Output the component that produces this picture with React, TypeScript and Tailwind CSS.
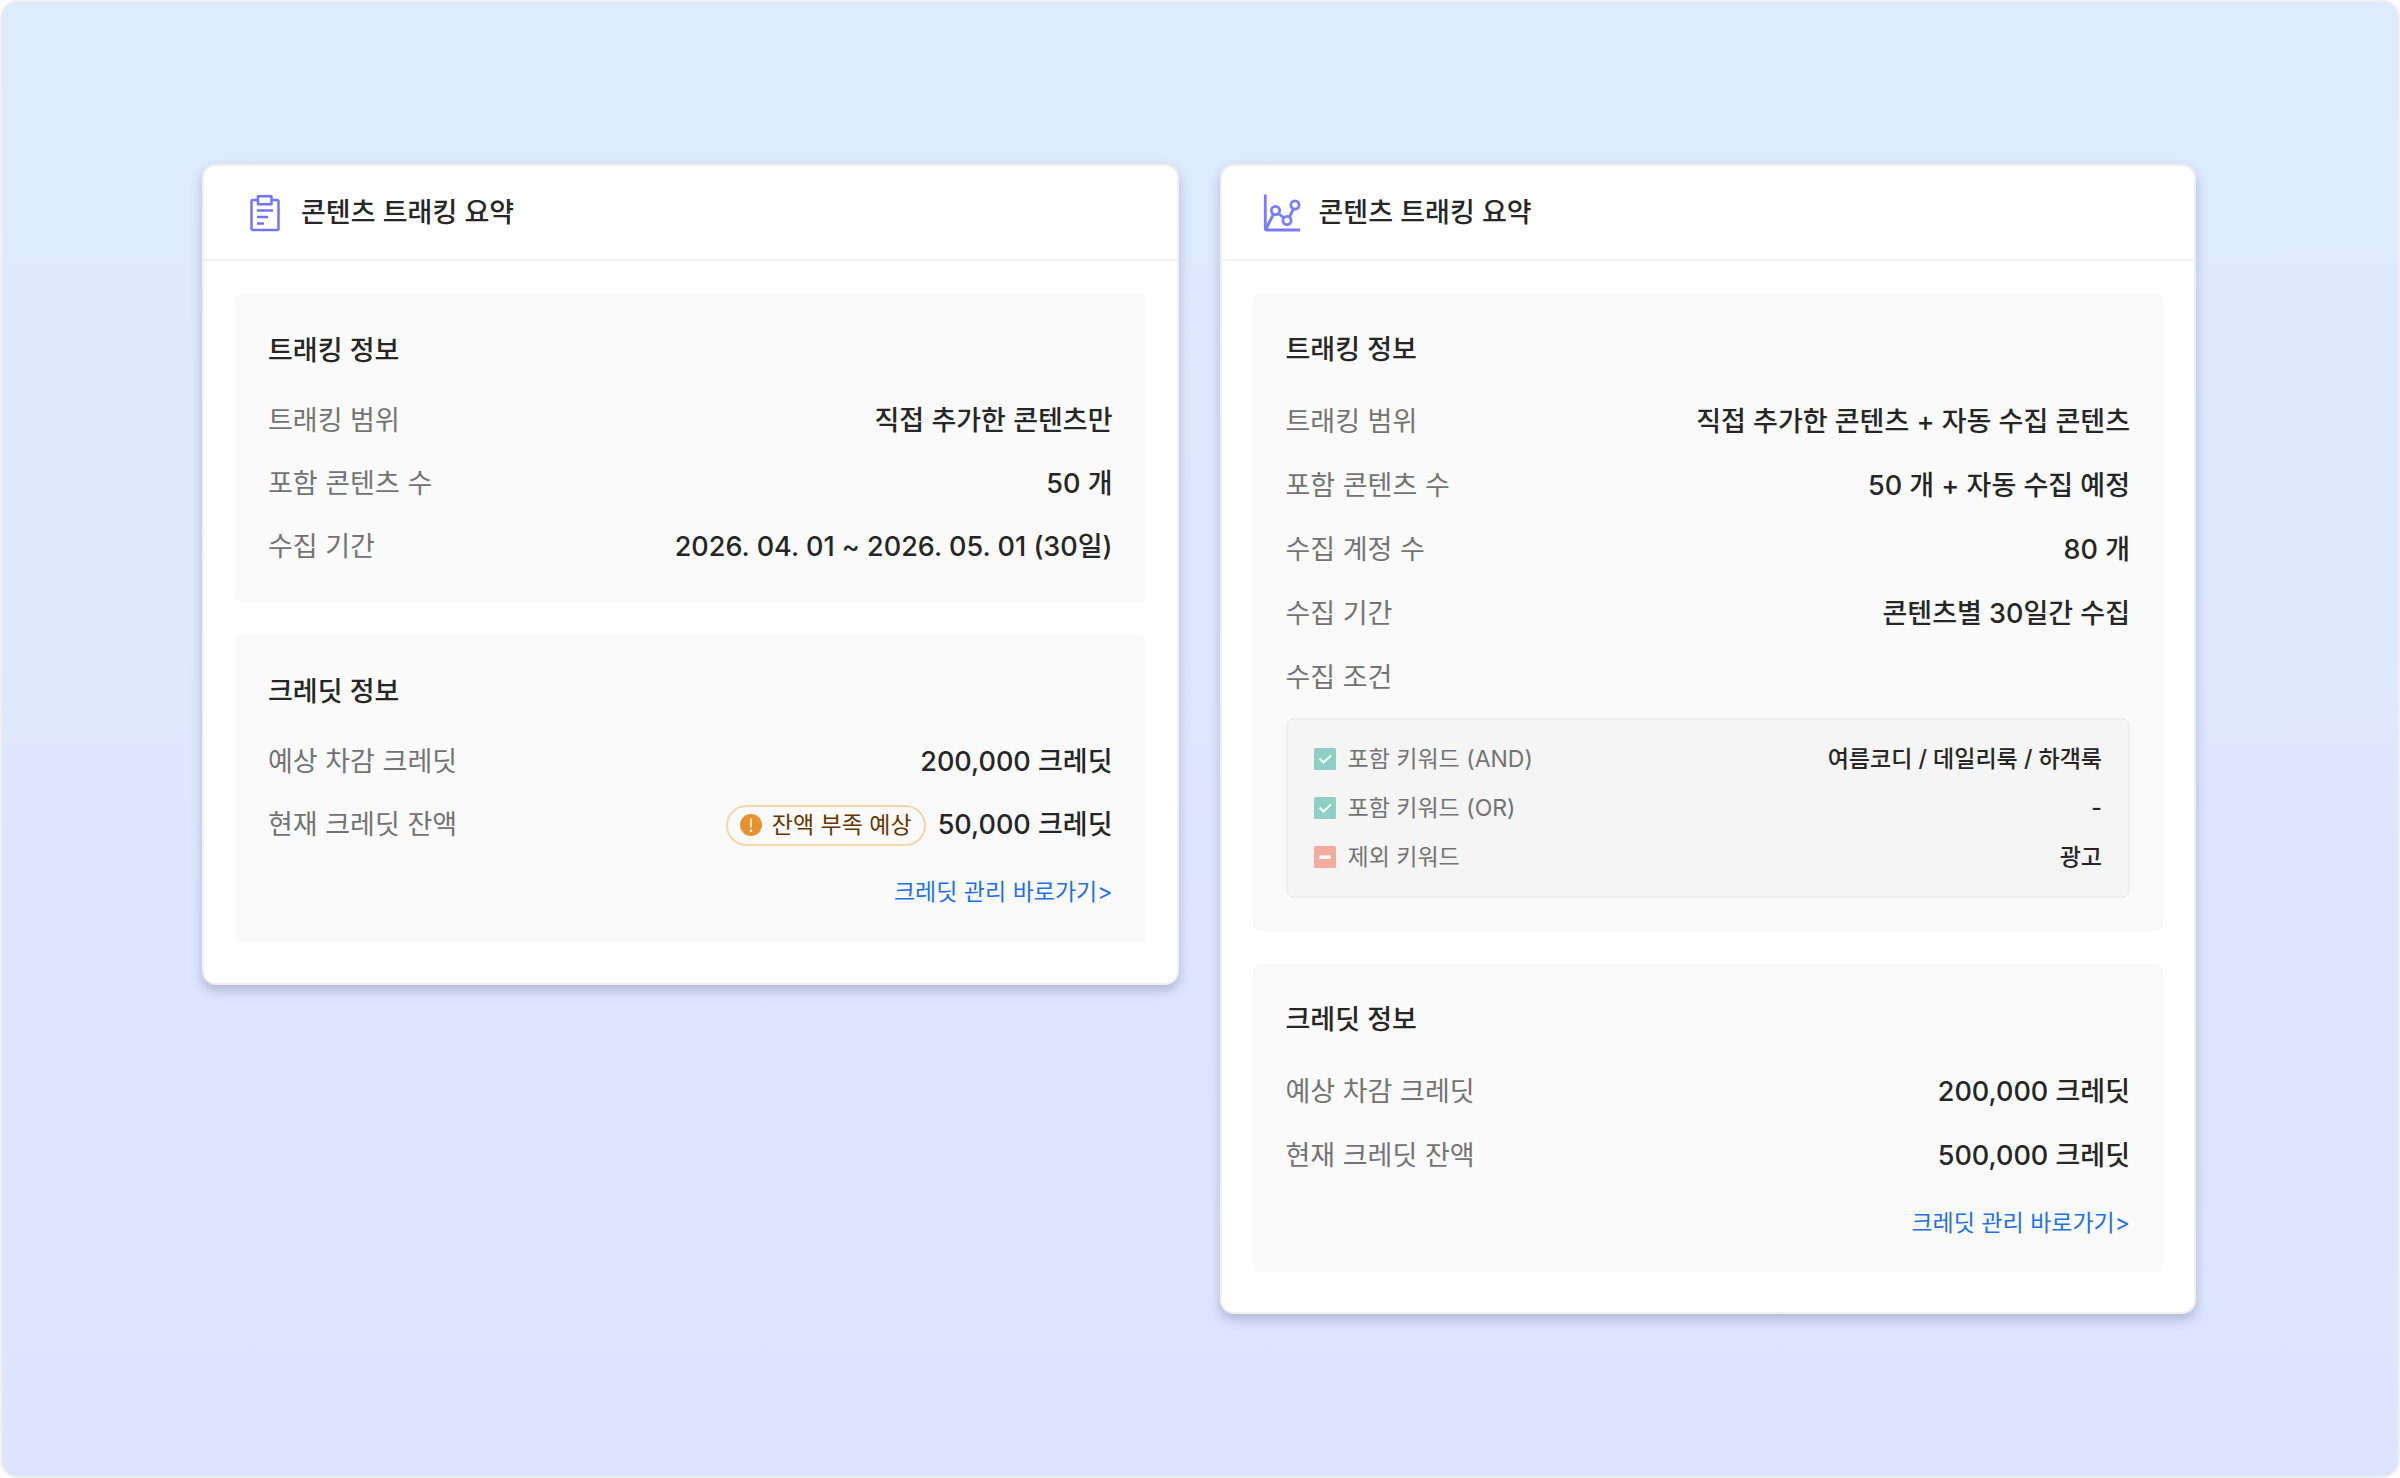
import type { ReactNode } from 'react'

type Row = { label: string; value: string; badge?: string }

type Spacing = { section: string; rows: string }

const compact: Spacing = {
  section: 'pt-[37px] pb-[35px] gap-[30px]',
  rows: 'gap-[23px]',
}

const roomy: Spacing = {
  section: 'pt-[36px] pb-[33px] gap-[32px]',
  rows: 'gap-[24px]',
}

const directTracking: Row[] = [
  { label: '트래킹 범위', value: '직접 추가한 콘텐츠만' },
  { label: '포함 콘텐츠 수', value: '50 개' },
  { label: '수집 기간', value: '2026. 04. 01 ~ 2026. 05. 01 (30일)' },
]

const directCredit: Row[] = [
  { label: '예상 차감 크레딧', value: '200,000 크레딧' },
  { label: '현재 크레딧 잔액', value: '50,000 크레딧', badge: '잔액 부족 예상' },
]

const autoTracking: Row[] = [
  { label: '트래킹 범위', value: '직접 추가한 콘텐츠 + 자동 수집 콘텐츠' },
  { label: '포함 콘텐츠 수', value: '50 개 + 자동 수집 예정' },
  { label: '수집 계정 수', value: '80 개' },
  { label: '수집 기간', value: '콘텐츠별 30일간 수집' },
  { label: '수집 조건', value: '' },
]

const autoCredit: Row[] = [
  { label: '예상 차감 크레딧', value: '200,000 크레딧' },
  { label: '현재 크레딧 잔액', value: '500,000 크레딧' },
]

const keywords = [
  { label: '포함 키워드 (AND)', value: '여름코디 / 데일리룩 / 하객룩', include: true },
  { label: '포함 키워드 (OR)', value: '-', include: true },
  { label: '제외 키워드', value: '광고', include: false },
]

function ClipboardIcon() {
  return (
    <svg width="38" height="38" viewBox="0 0 38 38" fill="none" stroke="#7373ff" strokeWidth="2.5" aria-hidden="true">
      <path d="M12.5 6H8a1.5 1.5 0 0 0-1.500 1.500v27A1.500 1.500 0 0 0 8 36h24a1.500 1.500 0 0 0 1.500-1.500v-27A1.500 1.500 0 0 0 32 6h-5.500" />
      <path d="M13 2.200h13.500v8H13z" strokeLinejoin="round" />
      <path d="M12 16.500h16M12 23h11M12 29.500h7" />
    </svg>
  )
}

function ChartIcon() {
  return (
    <svg width="38" height="38" viewBox="0 0 38 38" fill="none" stroke="#7b7bff" strokeWidth="2.8" aria-hidden="true">
      <path d="M2.300 .5v34a1.500 1.500 0 0 0 1.500 1.500H37" />
      <path d="M3 35l7.500-15M15.500 19.500l6 5M26 23.500l4.500-8.500" />
      <circle cx="12.500" cy="16.500" r="4.100" />
      <circle cx="24" cy="26.500" r="4.100" />
      <circle cx="32" cy="11" r="4.100" />
    </svg>
  )
}

function KeywordIcon({ include }: { include: boolean }) {
  return (
    <svg width="22" height="22" viewBox="0 0 22 22" fill="none" stroke="#fff" aria-hidden="true">
      <rect width="22" height="22" rx="1.500" fill={include ? '#8fcfc6' : '#f4ad9d'} stroke="none" />
      {include ? (
        <path d="M5.500 10.500l4 4 7.500-7" strokeWidth="2" />
      ) : (
        <path d="M5.500 11.200h11" strokeWidth="3.600" />
      )}
    </svg>
  )
}

function Badge({ text }: { text: string }) {
  return (
    <span className="flex h-[41px] items-center gap-2.5 rounded-full border-2 border-[#f8d5ab] px-3 text-[23px] font-normal text-[#663500]">
      <svg width="22" height="22" viewBox="0 0 22 22" aria-hidden="true">
        <circle cx="11" cy="11" r="11" fill="#e69230" />
        <path d="M11 4.500v9" stroke="#fff" strokeWidth="1.500" />
        <circle cx="11" cy="16.800" r="1.300" fill="#fff" />
      </svg>
      {text}
    </span>
  )
}

function Card({ icon, children }: { icon: ReactNode; children: ReactNode }) {
  return (
    <article className="rounded-[14px] border-2 border-[#f0f0f0] bg-white shadow-[0_6px_12px_rgba(40,50,90,0.25)]">
      <header className="flex h-[95px] items-center gap-[18px] border-b-2 border-[#f0f0f0] px-[41px]">
        {icon}
        <h2>콘텐츠 트래킹 요약</h2>
      </header>
      <div className="flex flex-col gap-[33px] px-[31px] pt-[33px] pb-[40px]">{children}</div>
    </article>
  )
}

function Section({
  title,
  rows,
  spacing,
  children,
}: {
  title: string
  rows: Row[]
  spacing: Spacing
  children?: ReactNode
}) {
  return (
    <section className={`flex flex-col rounded-md bg-[#fafafa] px-[33px] ${spacing.section}`}>
      <h3>{title}</h3>
      <div>
        <dl className={`flex flex-col ${spacing.rows}`}>
          {rows.map(row => (
            <div key={row.label} className="flex h-10 items-center justify-between">
              <dt className="font-normal text-[#737373]">{row.label}</dt>
              <dd className="flex items-center gap-3">
                {row.badge && <Badge text={row.badge} />}
                {row.value}
              </dd>
            </div>
          ))}
        </dl>
        {children}
      </div>
    </section>
  )
}

function CreditLink() {
  return (
    <div className="mt-[31px] flex justify-end text-[23px] leading-8 font-normal">
      <a href="#credits" className="text-[#1f6fe8]">
        크레딧 관리 바로가기&gt;
      </a>
    </div>
  )
}

function KeywordBox() {
  return (
    <dl className="mt-5 flex flex-col gap-[17px] rounded-lg border-2 border-[#f0f0f0] bg-[#f5f5f5] px-[26px] py-[23px] text-[23px] leading-8">
      {keywords.map(k => (
        <div key={k.label} className="flex items-center justify-between">
          <dt className="flex items-center gap-3 font-normal text-[#737373]">
            <KeywordIcon include={k.include} />
            {k.label}
          </dt>
          <dd>{k.value}</dd>
        </div>
      ))}
    </dl>
  )
}

export default function App() {
  return (
    <main className="min-h-screen rounded-[18px] border-2 border-[#f0f0f0] bg-linear-to-b from-[#deebff] to-[#dee4ff] pt-[162px] pr-[202px] pb-[162px] pl-[200px] font-['Inter','Noto_Sans_CJK_KR',sans-serif] text-[27px] leading-10 font-medium text-[#262626]">
      <div className="grid grid-cols-2 items-start gap-[41px]">
        <Card icon={<ClipboardIcon />}>
          <Section title="트래킹 정보" rows={directTracking} spacing={compact} />
          <Section title="크레딧 정보" rows={directCredit} spacing={compact}>
            <CreditLink />
          </Section>
        </Card>
        <Card icon={<ChartIcon />}>
          <Section title="트래킹 정보" rows={autoTracking} spacing={roomy}>
            <KeywordBox />
          </Section>
          <Section title="크레딧 정보" rows={autoCredit} spacing={roomy}>
            <CreditLink />
          </Section>
        </Card>
      </div>
    </main>
  )
}
